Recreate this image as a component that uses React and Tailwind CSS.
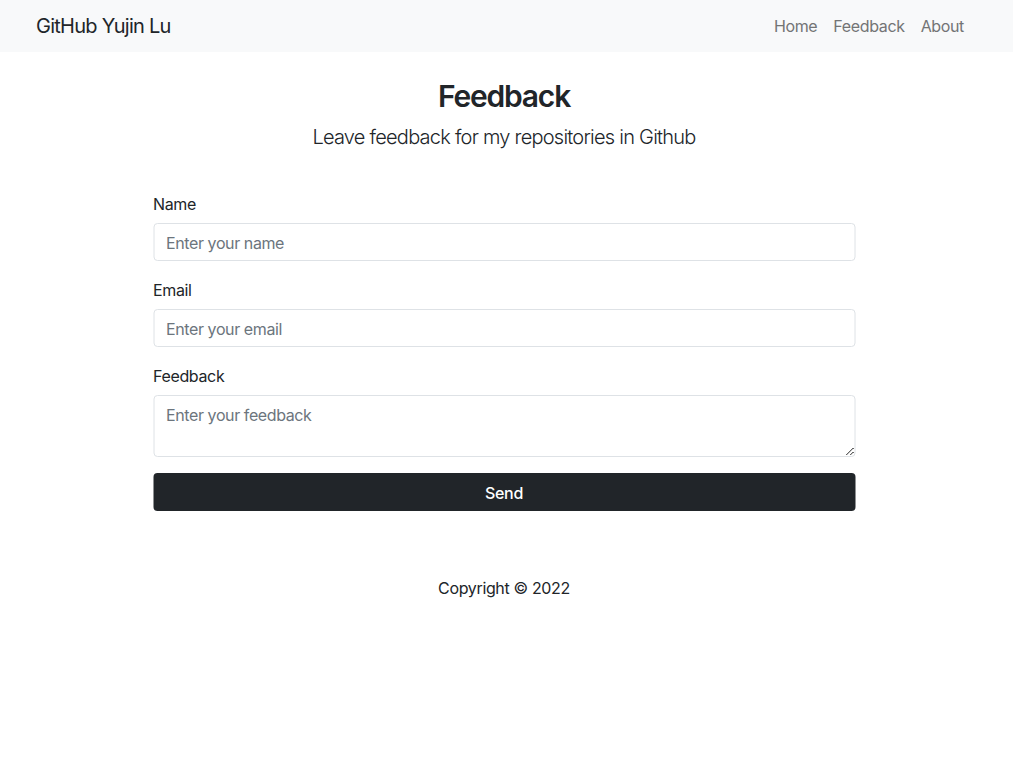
export default function App() {
  const font = { fontFamily: 'Inter, "Noto Sans", sans-serif' };
  return (
    <div className="min-h-[760px] bg-white text-[#212529] tracking-[-0.022em]" style={font}>
      <nav className="flex h-[52px] items-center justify-between bg-[#f8f9fa] pl-[36px] pr-[49px]">
        <span className="text-[20px] leading-[30px] tracking-[-0.037em] text-[#212529]">GitHub Yujin Lu</span>
        <div className="mb-[1px] flex gap-[16px] text-[16px] leading-[24px] text-[#737475]">
          <span>Home</span>
          <span>Feedback</span>
          <span>About</span>
        </div>
      </nav>
      <main className="mx-auto w-[702px] -translate-x-[2.5px]">
        <h1 className="mt-[26px] text-center text-[30px] font-semibold leading-[36px] tracking-[-0.04em]">Feedback</h1>
        <p className="mt-[8px] text-center text-[20px] font-light leading-[30px] tracking-[-0.038em]">
          Leave feedback for my repositories in Github
        </p>
        <form className="mt-[40px]">
          <label className="block text-[16px] leading-[24px]">Name</label>
          <input
            className="mt-[7px] block h-[38px] w-full rounded-[4px] border border-[#dee2e6] px-[12px] pt-[2px] text-[16px] tracking-[-0.025em] placeholder:text-[#6c757d] outline-none"
            placeholder="Enter your name"
          />
          <label className="mt-[17px] block text-[16px] leading-[24px]">Email</label>
          <input
            className="mt-[7px] block h-[38px] w-full rounded-[4px] border border-[#dee2e6] px-[12px] pt-[2px] text-[16px] tracking-[-0.025em] placeholder:text-[#6c757d] outline-none"
            placeholder="Enter your email"
          />
          <label className="mt-[17px] block text-[16px] leading-[24px]">Feedback</label>
          <textarea
            className="mt-[7px] block h-[62px] w-full rounded-[4px] border border-[#dee2e6] px-[12px] pt-[7px] pb-[5px] text-[16px] leading-[24px] tracking-[-0.025em] placeholder:text-[#6c757d] outline-none"
            placeholder="Enter your feedback"
          />
          <button
            type="button"
            className="mt-[16px] block h-[38px] w-full rounded-[4px] bg-[#212529] pt-[1px] text-[16px] font-medium text-white"
          >
            Send
          </button>
        </form>
        <footer className="mt-[65px] text-center text-[16px] leading-[24px]">Copyright © 2022</footer>
      </main>
    </div>
  );
}
